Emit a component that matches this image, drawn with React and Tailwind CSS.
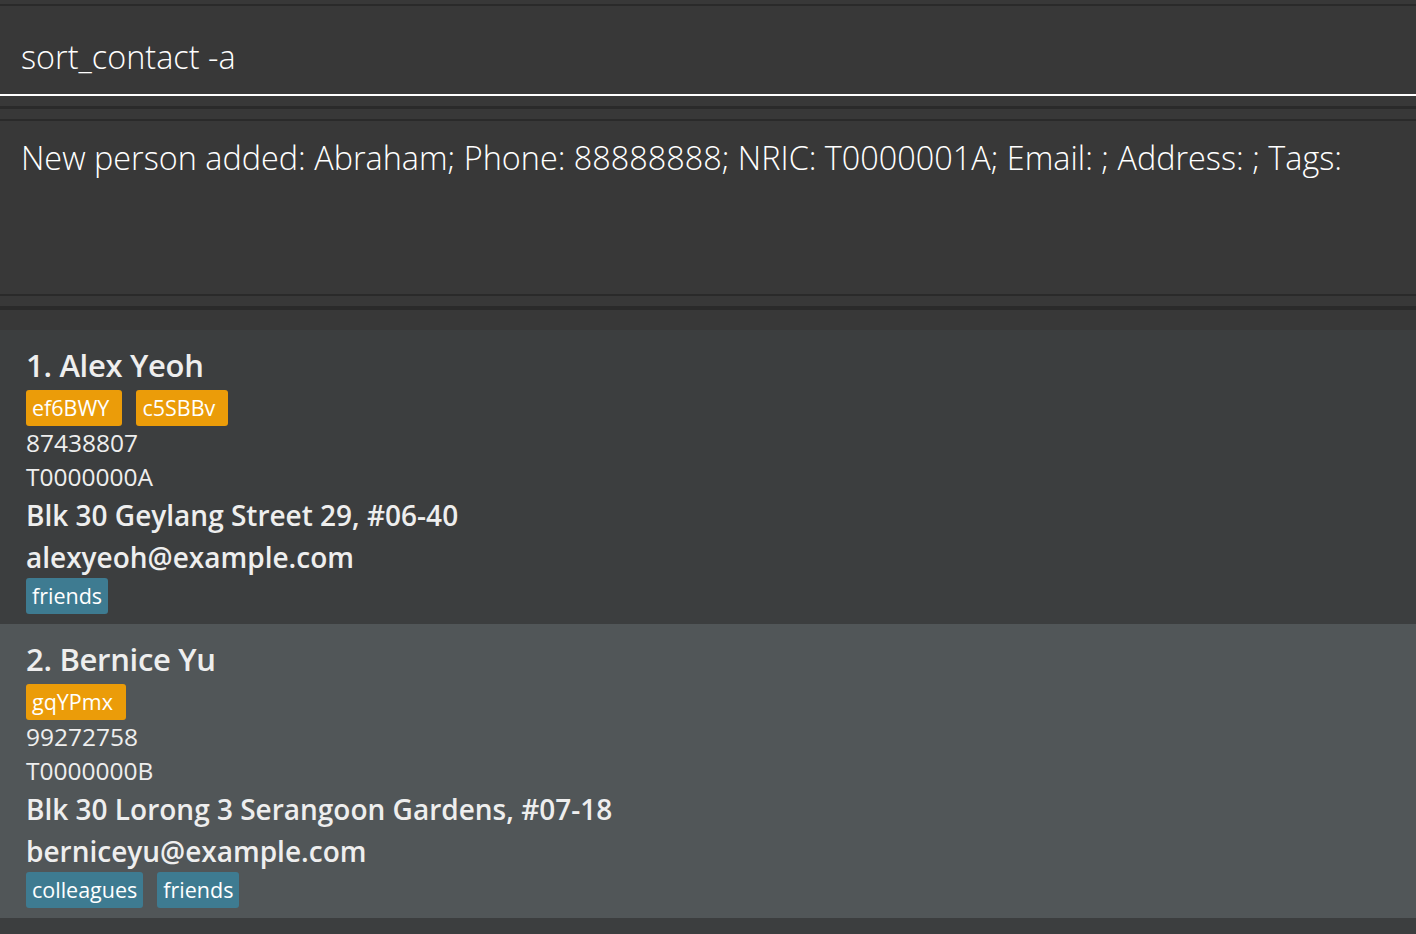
import React from "react";

const people = [
  {
    idx: 1,
    name: "Alex Yeoh",
    codes: ["ef6BWY", "c5SBBv"],
    phone: "87438807",
    nric: "T0000000A",
    address: "Blk 30 Geylang Street 29, #06-40",
    email: "alexyeoh@example.com",
    tags: ["friends"],
    bg: "bg-[#3c3e3f]",
  },
  {
    idx: 2,
    name: "Bernice Yu",
    codes: ["gqYPmx"],
    phone: "99272758",
    nric: "T0000000B",
    address: "Blk 30 Lorong 3 Serangoon Gardens, #07-18",
    email: "berniceyu@example.com",
    tags: ["colleagues", "friends"],
    bg: "bg-[#515658]",
  },
];

function Card({ p }) {
  return (
    <div className={`${p.bg} h-[294px] pl-[26px] pt-[12px] flex flex-col text-[#eeeeee]`} style={{ fontFamily: '"Open Sans", "Noto Sans", sans-serif' }}>
      <div className="h-[46px] flex items-center text-[31px] font-semibold tracking-[-0.3px]">
        {p.idx}. {p.name}
      </div>
      <div className="h-[36px] mt-[2px] flex gap-[14px]">
        {p.codes.map((c) => (
          <span key={c} className="h-[36px] bg-[#eb9c09] text-white rounded-[3px] pl-[6px] pr-[13px] flex items-center text-[21.5px]">
            {c}
          </span>
        ))}
      </div>
      <div className="h-[34px] flex items-center text-[24.5px]">{p.phone}</div>
      <div className="h-[34px] flex items-center text-[24.5px]">{p.nric}</div>
      <div className="h-[42px] flex items-center text-[28px] font-semibold">{p.address}</div>
      <div className="h-[42px] flex items-center text-[28px] font-semibold">{p.email}</div>
      <div className="h-[36px] flex gap-[14px]">
        {p.tags.map((t) => (
          <span key={t} className="h-[36px] bg-[#3e7b91] text-white rounded-[3px] px-[6px] flex items-center text-[21.5px]">
            {t}
          </span>
        ))}
      </div>
    </div>
  );
}

export default function App() {
  return (
    <div className="w-[1416px] h-[934px] bg-[#383838] flex flex-col overflow-hidden">
      <div className="h-[4px]" />
      <div className="h-[2px] bg-[#2a2a2a]" />
      <div
        className="h-[88px] flex items-center pt-[12px] pl-[21px] text-white text-[32.4px] font-light"
        style={{ fontFamily: '"Open Sans", "Noto Sans", sans-serif' }}
      >
        sort_contact -a
      </div>
      <div className="h-[2px] bg-white" />
      <div className="h-[10px]" />
      <div className="h-[3px] bg-[#2a2a2a]" />
      <div className="h-[10px]" />
      <div className="h-[2px] bg-[#2a2a2a]" />
      <div
        className="h-[173px] pl-[21px] pt-[14px] text-white text-[32.4px] font-light leading-[44px]"
        style={{ fontFamily: '"Open Sans", "Noto Sans", sans-serif' }}
      >
        New person added: Abraham; Phone: 88888888; NRIC: T0000001A; Email: ; Address: ; Tags:
      </div>
      <div className="h-[2px] bg-[#2a2a2a]" />
      <div className="h-[10px]" />
      <div className="h-[4px] bg-[#2a2a2a]" />
      <div className="h-[20px]" />
      <div className="flex-1 bg-[#3c3e3f] flex flex-col">
        {people.map((p) => (
          <Card key={p.idx} p={p} />
        ))}
      </div>
    </div>
  );
}
